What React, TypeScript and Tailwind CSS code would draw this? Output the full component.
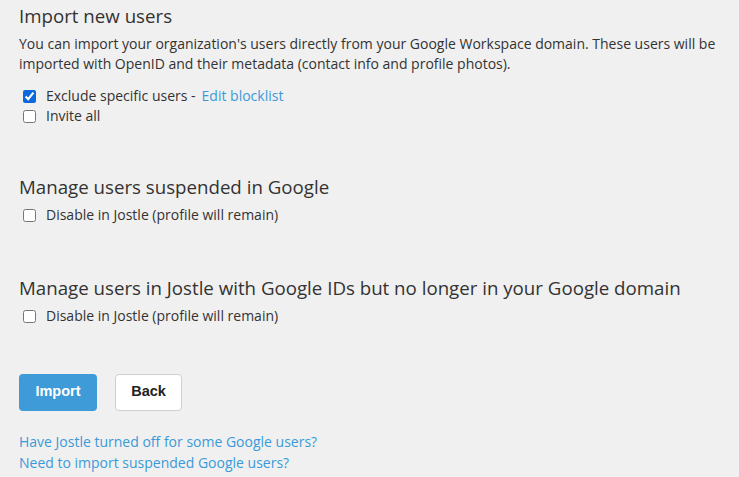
import { useState } from 'react';

function Check({ label, checked, onChange, children }: { label: string; checked: boolean; onChange: (v: boolean) => void; children?: React.ReactNode }) {
  return (
    <label className="flex items-center h-5 cursor-pointer">
      <input
        type="checkbox"
        checked={checked}
        onChange={(e) => onChange(e.target.checked)}
        className="ml-1 mr-[10px] h-[13px] w-[13px] accent-[#0b68dd]"
      />
      <span>{label}</span>
      {children}
    </label>
  );
}

export default function App() {
  const [exclude, setExclude] = useState(true);
  const [inviteAll, setInviteAll] = useState(false);
  const [disableSuspended, setDisableSuspended] = useState(false);
  const [disableMissing, setDisableMissing] = useState(false);

  return (
    <div className="min-h-[477px] bg-[#f0f0f0] px-[19px] pt-1 text-[14px] leading-5 text-[#333] font-['Open_Sans',sans-serif]">
      <h2 className="text-[18.7px] leading-6">Import new users</h2>
      <p className="mt-[6px]">
        You can import your organization's users directly from your Google Workspace domain. These users will be imported with OpenID and their metadata (contact info and profile photos).
      </p>
      <div className="mt-3">
        <Check label="Exclude specific users -" checked={exclude} onChange={setExclude}>
          <a href="#" className="ml-[6px] text-[#3a9ad9]">Edit blocklist</a>
        </Check>
        <Check label="Invite all" checked={inviteAll} onChange={setInviteAll} />
      </div>

      <h2 className="mt-[49px] text-[18.7px] leading-6">Manage users suspended in Google</h2>
      <div className="mt-[6px]">
        <Check label="Disable in Jostle (profile will remain)" checked={disableSuspended} onChange={setDisableSuspended} />
      </div>

      <h2 className="mt-[51px] text-[18.7px] leading-6">Manage users in Jostle with Google IDs but no longer in your Google domain</h2>
      <div className="mt-[6px]">
        <Check label="Disable in Jostle (profile will remain)" checked={disableMissing} onChange={setDisableMissing} />
      </div>

      <div className="mt-12 flex gap-[18px] font-['Liberation_Sans',Arial,sans-serif] text-[14.5px] font-bold">
        <button className="h-[37px] w-[78px] rounded-[4px] bg-[#3f9bd7] pb-[3px] text-white">Import</button>
        <button className="h-[37px] w-[67px] rounded-[4px] border border-[#cfcfcf] bg-white pb-[3px] text-[#222]">Back</button>
      </div>

      <div className="mt-5 flex flex-col leading-[21px] text-[#3a9ad9]">
        <a href="#">Have Jostle turned off for some Google users?</a>
        <a href="#">Need to import suspended Google users?</a>
      </div>
    </div>
  );
}
